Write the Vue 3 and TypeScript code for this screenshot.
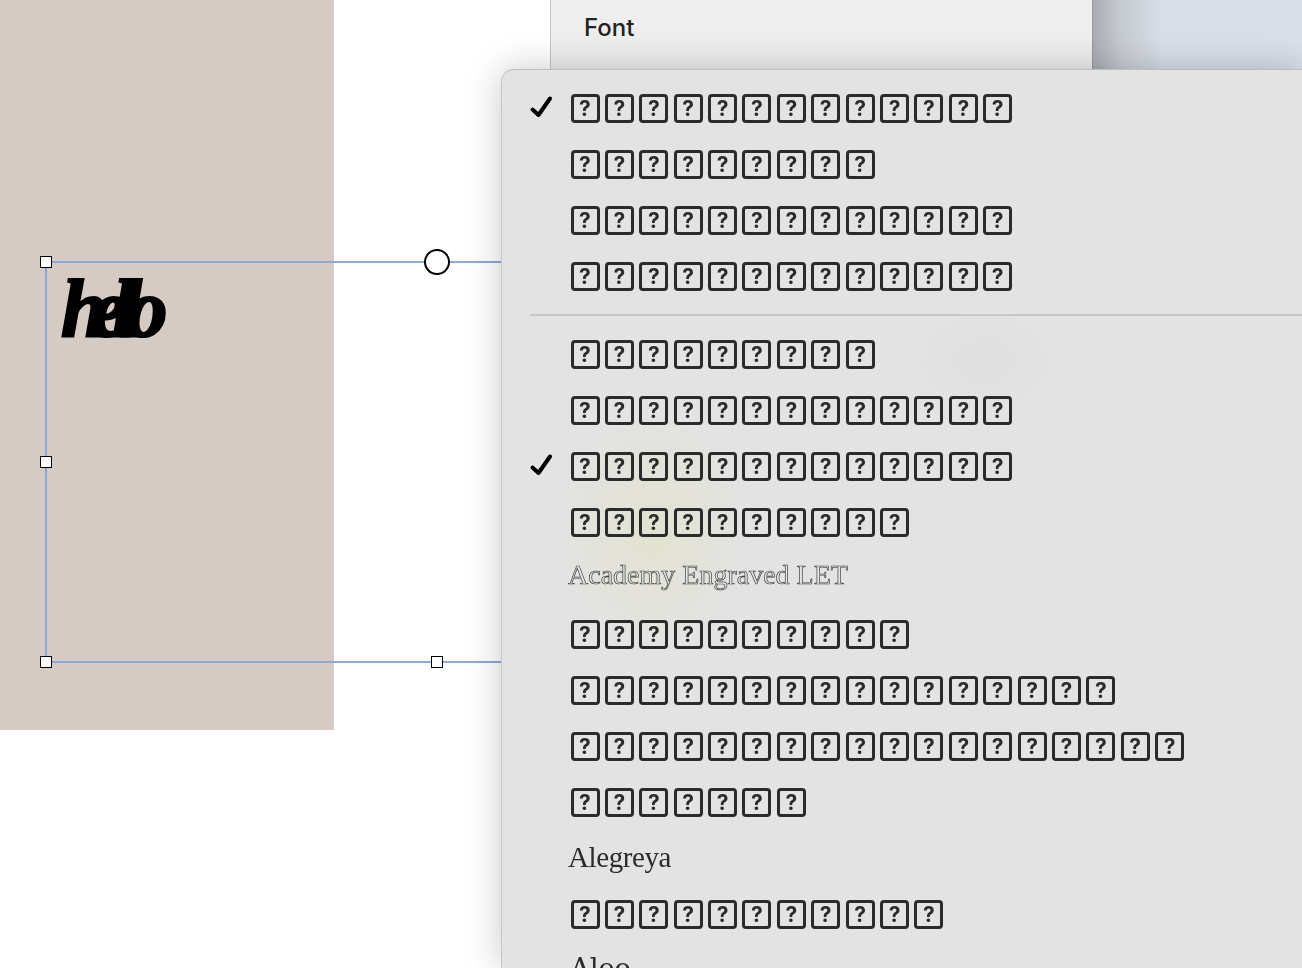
<template>
  <div class="screen">
    <!-- Canvas with the paper and the selected text box -->
    <main class="canvas">
      <div class="paper"></div>
    </main>

    <!-- Inspector panel behind the menu -->
    <aside class="panel">
      <h2 class="panel-title">Font</h2>
    </aside>

    <div class="desktop"></div>

    <div class="selection">
      <div class="hello">hello</div>
      <span class="handle top-left"></span>
      <span class="handle mid-left"></span>
      <span class="handle bottom-left"></span>
      <span class="handle bottom-mid"></span>
      <span class="rotate"></span>
    </div>

    <!-- Font dropdown -->
    <div class="menu">
      <template v-for="(row, i) in rows" :key="i">
        <div v-if="row.divider" class="divider"></div>
        <div v-else class="row">
          <span class="check">
            <svg v-if="row.checked" width="26" height="26" viewBox="0 0 26 26">
              <path d="M4.5 14.5 L10.5 20 L22 3.5" fill="none" stroke="#000" stroke-width="4" stroke-linecap="round" stroke-linejoin="round" />
            </svg>
          </span>
          <span v-if="row.label" class="label" :class="row.font">{{ row.label }}</span>
          <span v-else class="tofus">
            <span v-for="n in row.tofu" :key="n" class="tofu">?</span>
          </span>
        </div>
      </template>
    </div>
  </div>
</template>

<script setup lang="ts">
interface Row {
  tofu?: number
  checked?: boolean
  label?: string
  font?: string
  divider?: boolean
}

const rows: Row[] = [
  { tofu: 13, checked: true },
  { tofu: 9 },
  { tofu: 13 },
  { tofu: 13 },
  { divider: true },
  { tofu: 9 },
  { tofu: 13 },
  { tofu: 13, checked: true },
  { tofu: 10 },
  { label: 'Academy Engraved LET', font: 'engraved' },
  { tofu: 10 },
  { tofu: 16 },
  { tofu: 18 },
  { tofu: 7 },
  { label: 'Alegreya', font: 'alegreya' },
  { tofu: 11 },
  { label: 'Aleo', font: 'aleo' }
]
</script>

<style scoped>
.screen {
  position: relative;
  display: flex;
  width: 1302px;
  height: 968px;
  overflow: hidden;
  background: #fff;
  font-family: Inter, "Liberation Sans", sans-serif;
}

.canvas {
  flex: 0 0 550px;
}

.paper {
  width: 334px;
  height: 730px;
  background: #d5cbc3;
}

.panel {
  flex: 0 0 543px;
  box-sizing: border-box;
  height: 100%;
  padding: 14px 0 0 33px;
  background: #eeeeee;
  border-left: 1px solid #c6c6c6;
  border-right: 1px solid #9a9ca2;
}

.panel-title {
  margin: 0;
  font-size: 24px;
  line-height: 28px;
  font-weight: 500;
  color: #222;
}

.desktop {
  flex: 1;
  background: linear-gradient(90deg, #a9acb3 0, #c6cad1 28px, #d9dfe8 70px);
}

.selection {
  position: absolute;
  left: 45px;
  top: 261px;
  width: 783px;
  height: 402px;
  box-sizing: border-box;
  border: 2px solid #8fa8dc;
  padding: 1px 0 0 14px;
}

.hello {
  font-family: "Liberation Serif", serif;
  font-style: italic;
  font-weight: 700;
  font-size: 82px;
  line-height: 90px;
  letter-spacing: -15.5px;
  color: #000;
  -webkit-text-stroke: 2.2px #000;
}

.handle {
  position: absolute;
  width: 12px;
  height: 12px;
  box-sizing: border-box;
  background: #fff;
  border: 1.5px solid #000;
}

.top-left {
  left: -7px;
  top: -7px;
}

.mid-left {
  left: -7px;
  top: 193px;
}

.bottom-left {
  left: -7px;
  top: 393px;
}

.bottom-mid {
  left: 384px;
  top: 393px;
}

.rotate {
  position: absolute;
  left: 377px;
  top: -14px;
  width: 26px;
  height: 26px;
  box-sizing: border-box;
  border: 2.5px solid #000;
  border-radius: 50%;
  background: #fff;
}

.menu {
  position: absolute;
  left: 501px;
  top: 69px;
  right: 0;
  bottom: 0;
  z-index: 2;
  padding: 10px 0 0 28px;
  background:
    radial-gradient(ellipse 95px 120px at 150px 460px, rgba(226, 226, 200, 0.7), rgba(226, 226, 200, 0) 100%),
    radial-gradient(ellipse 70px 50px at 483px 290px, rgba(205, 205, 205, 0.2), rgba(205, 205, 205, 0) 100%),
    #e3e3e3;
  border-top: 1px solid #bdbdbd;
  border-left: 1px solid #c8c8c8;
  border-top-left-radius: 13px;
  box-shadow: 0 0 36px rgba(0, 0, 0, 0.22);
  will-change: opacity;
}

.row {
  display: flex;
  align-items: center;
  height: 56px;
}

.check {
  flex: 0 0 40px;
  height: 26px;
}

.check svg {
  display: block;
  margin-left: -2px;
}

.tofus {
  display: flex;
  gap: 5.4px;
  margin-left: 0.5px;
}

.tofu {
  width: 29px;
  height: 29px;
  box-sizing: border-box;
  border: 3px solid #2b2b2b;
  border-radius: 4px;
  font-family: Inter, sans-serif;
  font-size: 21px;
  line-height: 23px;
  font-weight: 700;
  text-align: center;
  color: #2b2b2b;
}

.divider {
  height: 1.5px;
  margin: 10px 0 10.5px 0;
  background: #c8c8c8;
}

.label {
  margin-left: -2px;
  color: #2b2b2b;
  white-space: nowrap;
}

.engraved {
  position: relative;
  top: -3px;
  font-family: "Liberation Serif", serif;
  font-size: 28px;
  letter-spacing: 0;
  color: #e6e6e6;
  -webkit-text-stroke: 0.7px #444;
}

.alegreya {
  position: relative;
  top: -1px;
  font-family: "Liberation Serif", serif;
  font-size: 29px;
  letter-spacing: -0.4px;
}

.aleo {
  position: relative;
  top: -2px;
  margin-left: 0;
  font-family: "DejaVu Serif", serif;
  font-size: 28px;
  letter-spacing: -0.5px;
}
</style>
